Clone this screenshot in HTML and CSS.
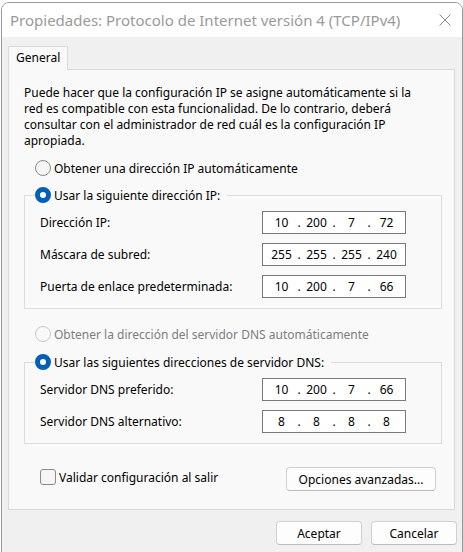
FILE: index.html
```html
<!DOCTYPE html>
<html lang="es">
<head>
<meta charset="utf-8">
<title>Propiedades: Protocolo de Internet versión 4 (TCP/IPv4)</title>
<link rel="stylesheet" href="styles.css">
</head>
<body>
<div class="window">
  <div class="titlebar">
    <span class="title">Propiedades: Protocolo de Internet versión 4 (TCP/IPv4)</span>
    <span class="close"><svg width="12" height="12" viewBox="0 0 12 12"><path d="M0.5 0.5 L11.5 11.5 M11.5 0.5 L0.5 11.5" stroke="#8a8a8a" stroke-width="1" fill="none"/></svg></span>
  </div>
  <div class="client">
    <div class="tabs"><div class="tab">General</div></div>
    <div class="panel">
      <p class="intro">Puede hacer que la configuración IP se asigne automáticamente si la<br>red es compatible con esta funcionalidad. De lo contrario, deberá<br>consultar con el administrador de red cuál es la configuración IP<br>apropiada.</p>
      <div class="radio-row"><span class="radio"></span><span>Obtener una dirección IP automáticamente</span></div>
      <fieldset class="group group-ip">
        <legend><span class="radio checked"></span><span>Usar la siguiente dirección IP:</span></legend>
        <div class="field-row"><span class="label">Dirección IP:</span><span class="ip"><span class="oct">10</span><span class="dot">.</span><span class="oct">200</span><span class="dot">.</span><span class="oct">7</span><span class="dot">.</span><span class="oct">72</span></span></div>
        <div class="field-row"><span class="label">Máscara de subred:</span><span class="ip"><span class="oct">255</span><span class="dot">.</span><span class="oct">255</span><span class="dot">.</span><span class="oct">255</span><span class="dot">.</span><span class="oct">240</span></span></div>
        <div class="field-row"><span class="label">Puerta de enlace predeterminada:</span><span class="ip"><span class="oct">10</span><span class="dot">.</span><span class="oct">200</span><span class="dot">.</span><span class="oct">7</span><span class="dot">.</span><span class="oct">66</span></span></div>
      </fieldset>
      <div class="radio-row disabled dns-auto"><span class="radio"></span><span>Obtener la dirección del servidor DNS automáticamente</span></div>
      <fieldset class="group group-dns">
        <legend><span class="radio checked"></span><span>Usar las siguientes direcciones de servidor DNS:</span></legend>
        <div class="field-row"><span class="label">Servidor DNS preferido:</span><span class="ip"><span class="oct">10</span><span class="dot">.</span><span class="oct">200</span><span class="dot">.</span><span class="oct">7</span><span class="dot">.</span><span class="oct">66</span></span></div>
        <div class="field-row"><span class="label">Servidor DNS alternativo:</span><span class="ip"><span class="oct">8</span><span class="dot">.</span><span class="oct">8</span><span class="dot">.</span><span class="oct">8</span><span class="dot">.</span><span class="oct">8</span></span></div>
      </fieldset>
      <div class="bottom-row">
        <div class="check-row"><span class="checkbox"></span><span>Validar configuración al salir</span></div>
        <button class="btn btn-adv">Opciones avanzadas...</button>
      </div>
    </div>
    <div class="actions">
      <button class="btn btn-dlg">Aceptar</button>
      <button class="btn btn-dlg">Cancelar</button>
    </div>
  </div>
</div>
</body>
</html>
```

FILE: styles.css
```css
* { box-sizing: border-box; }
html, body { margin: 0; padding: 0; }
body {
  background: #ffffff;
  font-family: "Noto Sans", "Open Sans", sans-serif;
  font-size: 12px;
  color: #000;
}
.window {
  margin: 2px 0 0 1px;
  width: 462px;
  height: 560px;
  border: 1px solid #9a9a9a;
  border-radius: 8px 8px 0 0;
  overflow: hidden;
  background: #f0f0f0;
}
.titlebar {
  height: 34px;
  background: #ffffff;
  display: flex;
  align-items: center;
  justify-content: space-between;
  padding: 0 11px 0 8px;
}
.title {
  font-size: 15px;
  color: #9a9a9a;
  white-space: nowrap;
}
.close { display: flex; width: 12px; height: 12px; }
.client {
  padding: 9px 5px 0 6px;
}
.tabs { display: flex; }
.tab {
  width: 60px;
  height: 24px;
  margin-bottom: -1px;
  border: 1px solid #d9d9d9;
  border-bottom: none;
  background: #f9f9f9;
  padding: 3px 0 0 7px;
  position: relative;
  z-index: 1;
  line-height: 16px;
}
.panel {
  margin-right: 2px;
  height: 441px;
  border: 1px solid #d9d9d9;
  background: #f9f9f9;
  padding: 15px 12px 0 15px;
}
.intro {
  margin: 0;
  line-height: 16px;
  white-space: nowrap;
}
.radio-row {
  display: flex;
  align-items: center;
  height: 16px;
  margin: 11px 0 0 11px;
  gap: 3px;
  white-space: nowrap;
}
.radio {
  width: 16px;
  height: 16px;
  border-radius: 50%;
  border: 1px solid #8a8a8a;
  background: #f5f5f5;
  flex: none;
}
.radio.checked {
  border: 5px solid #005fb8;
  background: #ffffff;
}
.disabled { color: #7d7d7d; }
.disabled .radio { border-color: #c8c8c8; background: #f9f9f9; }
.group {
  margin: 11px 0 0 0;
  padding: 0 35px 10px 15px;
  border: 1px solid #dcdcdc;
  min-width: 0;
}
.group legend {
  display: flex;
  align-items: center;
  gap: 3px;
  height: 16px;
  padding: 0 7px 0 0;
  margin-left: -5px;
  background: #f9f9f9;
  white-space: nowrap;
}
.field-row {
  display: flex;
  align-items: center;
  justify-content: space-between;
  margin-top: 9px;
}
.group legend + .field-row { margin-top: 8px; }
.ip {
  width: 144px;
  height: 23px;
  border: 1px solid #7a7a7a;
  background: #ffffff;
  display: flex;
  align-items: center;
  padding-left: 5px;
}
.oct { width: 27px; text-align: center; }
.dot { width: 8px; text-align: center; }
.dns-auto { margin-top: 17px; }
.group-dns { margin-top: 12px; }
.bottom-row {
  display: flex;
  justify-content: space-between;
  align-items: flex-start;
  margin-top: 23px;
  padding: 0 6px 0 16px;
}
.check-row {
  display: flex;
  align-items: center;
  gap: 3px;
  margin-top: 2px;
  height: 16px;
}
.checkbox {
  width: 16px;
  height: 16px;
  border: 1px solid #8a8a8a;
  border-radius: 3px;
  background: #f5f5f5;
}
.btn {
  font-family: inherit;
  font-size: 12px;
  color: #000;
  background: #fdfdfd;
  border: 1px solid #d0d0d0;
  border-bottom-color: #bcbcbc;
  border-radius: 4px;
  height: 24px;
  padding: 0;
}
.btn-adv { width: 150px; }
.actions {
  display: flex;
  justify-content: flex-end;
  gap: 9px;
  margin-top: 11px;
}
.btn-dlg { width: 86px; }
```
